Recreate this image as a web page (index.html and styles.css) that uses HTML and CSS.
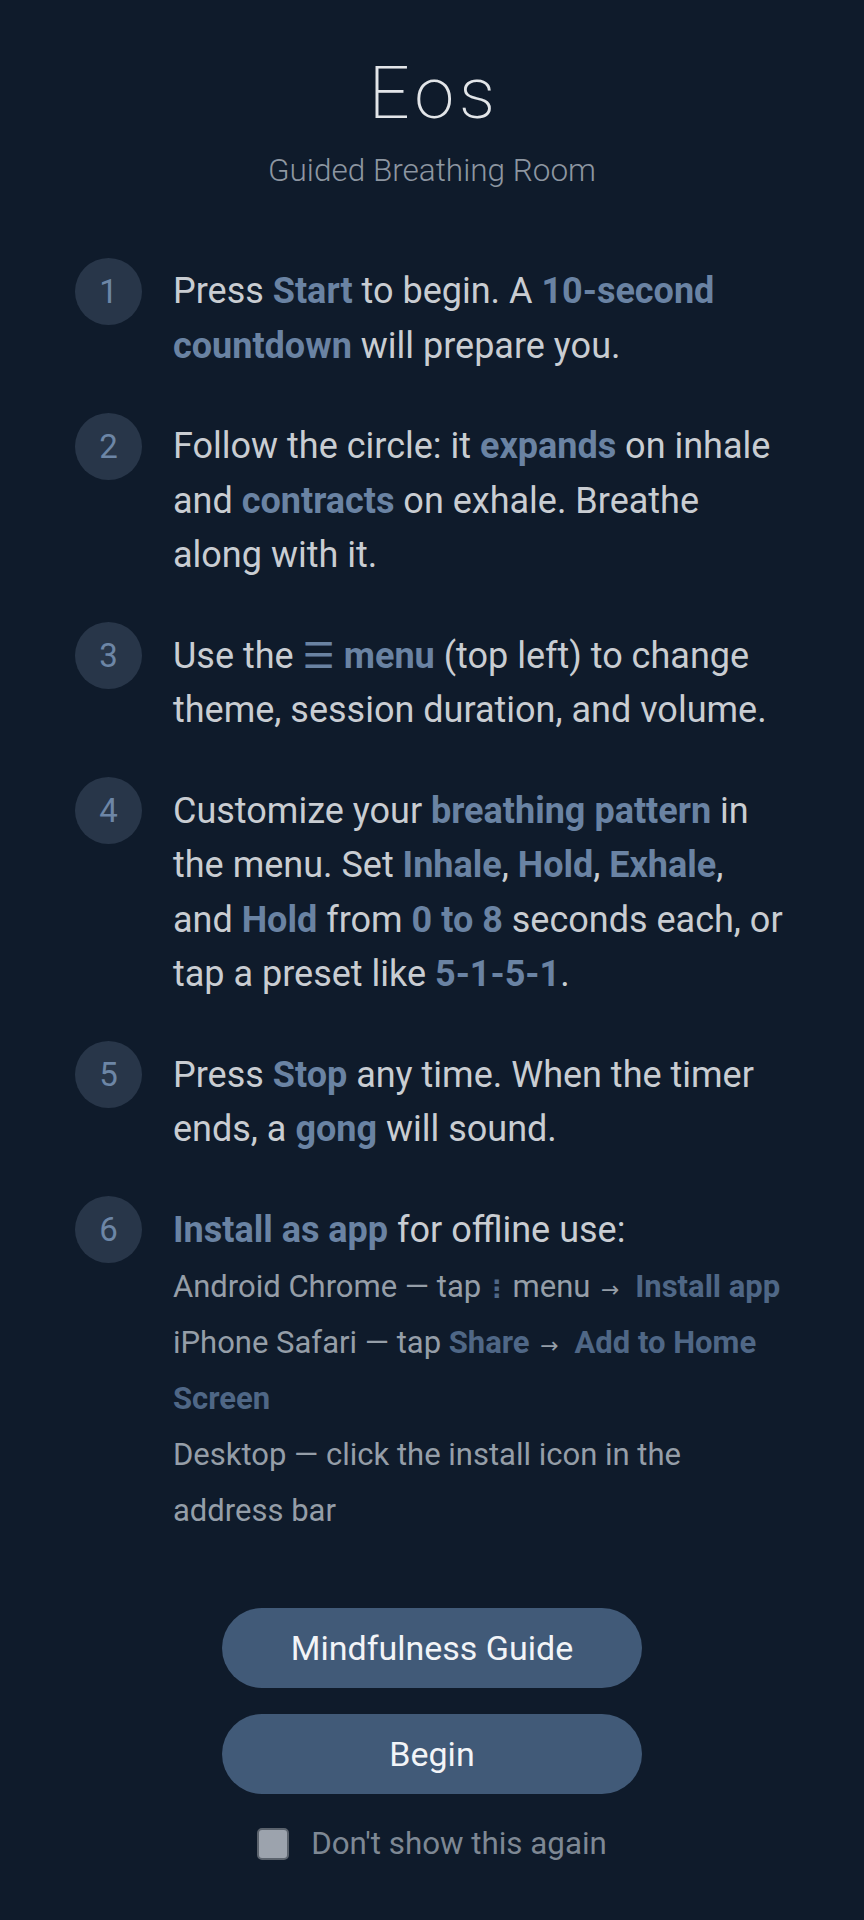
FILE: index.html
```html
<!DOCTYPE html>
<html lang="en">
<head>
<meta charset="utf-8">
<title>Eos — Guided Breathing Room</title>
<link rel="stylesheet" href="styles.css">
</head>
<body>
<main class="page">
  <header class="head">
    <h1 class="title">Eos</h1>
    <p class="subtitle">Guided Breathing Room</p>
  </header>

  <ol class="steps">
    <li class="step">
      <span class="num">1</span>
      <div class="text">Press <b class="hl">Start</b> to begin. A <b class="hl">10-second countdown</b> will prepare you.</div>
    </li>
    <li class="step">
      <span class="num">2</span>
      <div class="text">Follow the circle: it <b class="hl">expands</b> on inhale and <b class="hl">contracts</b> on exhale. Breathe along with it.</div>
    </li>
    <li class="step">
      <span class="num">3</span>
      <div class="text">Use the <b class="hl"><span class="glyph">☰</span> menu</b> (top left) to change theme, session duration, and volume.</div>
    </li>
    <li class="step">
      <span class="num">4</span>
      <div class="text">Customize your <b class="hl">breathing pattern</b> in the menu. Set <b class="hl">Inhale</b>, <b class="hl">Hold</b>, <b class="hl">Exhale</b>, and <b class="hl">Hold</b> from <b class="hl">0 to 8</b> seconds each, or tap a preset like <b class="hl">5-1-5-1</b>.</div>
    </li>
    <li class="step">
      <span class="num">5</span>
      <div class="text">Press <b class="hl">Stop</b> any time. When the timer ends, a <b class="hl">gong</b> will sound.</div>
    </li>
    <li class="step">
      <span class="num">6</span>
      <div class="text">
        <div><b class="hl">Install as app</b> for offline use:</div>
        <div class="sub first">Android Chrome — tap <b class="hl-sub dots">⋮</b> menu <span class="arrow">→</span> <b class="hl-sub">Install app</b></div>
        <div class="sub">iPhone Safari — tap <b class="hl-sub">Share</b> <span class="arrow">→</span> <b class="hl-sub">Add to Home Screen</b></div>
        <div class="sub">Desktop — click the install icon in the address bar</div>
      </div>
    </li>
  </ol>

  <div class="actions">
    <button class="btn" type="button">Mindfulness Guide</button>
    <button class="btn" type="button">Begin</button>
    <label class="check">
      <input type="checkbox" class="box">
      <span>Don't show this again</span>
    </label>
  </div>
</main>
</body>
</html>
```

FILE: styles.css
```css
* { box-sizing: border-box; }

html, body {
  margin: 0;
  padding: 0;
  background: #0f1b2b;
}

body {
  font-family: Roboto, "Liberation Sans", sans-serif;
  color: #c9cdd2;
  min-height: 1920px;
}

.page {
  width: 714px;
  margin: 0 auto;
  padding-top: 58px;
}

.head {
  text-align: center;
}

.title {
  margin: 0;
  font-size: 72px;
  line-height: 72px;
  font-weight: 200;
  letter-spacing: 5px;
  padding-left: 5px;
  color: #e2e5e8;
}

.subtitle {
  margin: 25px 0 0;
  font-size: 31.5px;
  line-height: 32px;
  font-weight: 300;
  color: #8d96a1;
}

.steps {
  list-style: none;
  margin: 77px 0 0;
  padding: 0;
  display: flex;
  flex-direction: column;
  gap: 46px;
}

.step {
  display: flex;
  align-items: flex-start;
  gap: 31px;
}

.num {
  flex: 0 0 67px;
  width: 67px;
  height: 67px;
  margin-top: -6.5px;
  border-radius: 50%;
  background: #283649;
  color: #6d86a6;
  font-size: 33px;
  display: flex;
  align-items: center;
  justify-content: center;
}

.text {
  flex: 1;
  font-size: 36px;
  line-height: 54.5px;
  color: #c9cdd2;
}

.hl {
  font-weight: 700;
  color: #6a83a3;
}

.glyph {
  font-family: "DejaVu Sans", sans-serif;
  font-weight: 400;
  line-height: 1;
}

.sub {
  font-size: 31px;
  line-height: 56px;
  color: #959ea8;
}

.sub.first {
  margin-top: 2px;
}

.hl-sub {
  font-weight: 700;
  color: #4f6786;
}

.dots {
  font-family: "Noto Sans", "DejaVu Sans", sans-serif;
  font-size: 24px;
  line-height: 1;
  margin: 0 -4px;
}

.arrow {
  font-size: 22px;
  line-height: 1;
  margin: 0 8px 0 3px;
  font-family: "DejaVu Sans", sans-serif;
}

.actions {
  margin-top: 69px;
  display: flex;
  flex-direction: column;
  align-items: center;
  gap: 26px;
}

.btn {
  width: 420px;
  height: 80px;
  border: none;
  border-radius: 40px;
  background: #415a78;
  color: #f2f4f7;
  font-family: Roboto, "Liberation Sans", sans-serif;
  font-size: 34px;
  font-weight: 400;
}

.check {
  margin-top: 5px;
  display: flex;
  align-items: center;
  gap: 22px;
  font-size: 31.3px;
  color: #7e8894;
}

.box {
  appearance: none;
  -webkit-appearance: none;
  margin: 0;
  width: 32px;
  height: 32px;
  border: 2px solid #5b636d;
  border-radius: 5px;
  background: #9ca3ad;
}
```
